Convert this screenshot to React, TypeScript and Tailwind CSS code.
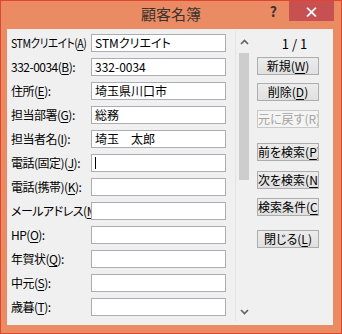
import React from "react";

type Row = { pre: string; hot: string; post: string; value?: string; caret?: boolean; tight?: boolean };

const ROWS: Row[] = [
  { pre: "STMクリエイト(", hot: "A", post: ")", value: "STMクリエイト", tight: true },
  { pre: "332-0034(", hot: "B", post: "):", value: "332-0034" },
  { pre: "住所(", hot: "E", post: "):", value: "埼玉県川口市" },
  { pre: "担当部署(", hot: "G", post: "):", value: "総務" },
  { pre: "担当者名(", hot: "I", post: "):", value: "埼玉　太郎" },
  { pre: "電話(固定)(", hot: "J", post: "):", caret: true },
  { pre: "電話(携帯)(", hot: "K", post: "):" },
  { pre: "メールアドレス(", hot: "M", post: "):" },
  { pre: "HP(", hot: "O", post: "):" },
  { pre: "年賀状(", hot: "Q", post: "):" },
  { pre: "中元(", hot: "S", post: "):" },
  { pre: "歳暮(", hot: "T", post: "):" },
];

type Btn = { pre: string; hot: string; post: string; mt: string; disabled?: boolean };

// spacing taken from the dialog, groups are split by bigger gaps
const BUTTONS: Btn[] = [
  { pre: "新規(", hot: "W", post: ")", mt: "mt-[4px]" },
  { pre: "削除(", hot: "D", post: ")", mt: "mt-[8px]" },
  { pre: "元に戻す(R", hot: "", post: ")", mt: "mt-[9px]", disabled: true },
  { pre: "前を検索(", hot: "P", post: ")", mt: "mt-[15px]" },
  { pre: "次を検索(", hot: "N", post: ")", mt: "mt-[10px]" },
  { pre: "検索条件(", hot: "C", post: ")", mt: "mt-[9px]" },
  { pre: "閉じる(", hot: "L", post: ")", mt: "mt-[14px]" },
];

function Hot({ pre, hot, post }: { pre: string; hot: string; post: string }) {
  return (
    <>
      {pre}
      {hot && <u className="underline-offset-2">{hot}</u>}
      {post}
    </>
  );
}

function Chevron({ down }: { down?: boolean }) {
  return (
    <svg width="9" height="6" viewBox="0 0 9 6" className={down ? "rotate-180" : ""}>
      <path d="M1 5 L4.5 1.5 L8 5" fill="none" stroke="#606060" strokeWidth="1.6" />
    </svg>
  );
}

export default function App() {
  return (
    <div className="w-[342px] h-[334px] bg-[#ea8b63] border border-[#e2452f] flex flex-col font-['Noto_Sans_CJK_JP',sans-serif] [font-feature-settings:'palt'] text-[12px] text-black">
      {/* Title bar */}
      <div className="relative h-[28px] shrink-0">
        <div className="absolute inset-0 flex items-center justify-center text-[15px] text-[#3a3230] pb-[2px] [font-feature-settings:normal]">
          顧客名簿
        </div>
        <div className="absolute right-[7px] top-0 flex items-start">
          <span className="mt-[1px] mr-[12px] text-[14px] font-bold text-[#3a3230] leading-[18px]">?</span>
          <div className="w-[45px] h-[20px] bg-[#c75050] flex items-center justify-center text-white text-[15px] font-bold leading-none">
            ×
          </div>
        </div>
      </div>

      {/* Client area */}
      <div className="ml-[6px] mr-[8px] mb-[8px] flex-1 bg-[#f0f0f0] flex pt-[2px]">
        {/* Fields */}
        <div className="flex flex-col pl-[4px]">
          {ROWS.map((r) => (
            <div key={r.hot} className="h-[24px] flex items-center">
              <div className="w-[80px] whitespace-nowrap overflow-hidden leading-[18px] tracking-[-0.5px]">
                <span className={r.tight ? "inline-block origin-left scale-x-[0.88]" : ""}>
                  <Hot pre={r.pre} hot={r.hot} post={r.post} />
                </span>
              </div>
              <div className="w-[135px] h-[18px] border border-[#abadb3] bg-white flex items-center pl-[3px] leading-[16px] whitespace-nowrap overflow-hidden">
                {r.value}
                {r.caret && <span className="w-px h-[12px] bg-black" />}
              </div>
            </div>
          ))}
        </div>

        {/* Scrollbar */}
        <div className="ml-[9px] w-[17px] h-[290px] flex flex-col items-center border-l border-[#e4e4e4]">
          <div className="h-[22px] flex items-center justify-center">
            <Chevron />
          </div>
          <div className="w-[10px] h-[127px] bg-[#cdcdcd]" />
          <div className="flex-1" />
          <div className="h-[18px] flex items-center justify-center">
            <Chevron down />
          </div>
        </div>

        {/* Buttons */}
        <div className="flex flex-col pl-[5px] pt-[4px]">
          <div className="w-[75px] text-center leading-[18px] text-[13px]">1 / 1</div>
          {BUTTONS.map((b) => (
            <div
              key={b.pre}
              className={`${b.mt} w-[62px] h-[18px] border text-center whitespace-nowrap overflow-hidden leading-[16px] ${
                b.disabled
                  ? "border-[#c8c8c8] bg-[#f4f4f4] text-[#a3a3a3]"
                  : "border-[#adadad] bg-gradient-to-b from-[#ececec] to-[#e0e0e0]"
              }`}
            >
              <Hot pre={b.pre} hot={b.hot} post={b.post} />
            </div>
          ))}
        </div>
      </div>
    </div>
  );
}
